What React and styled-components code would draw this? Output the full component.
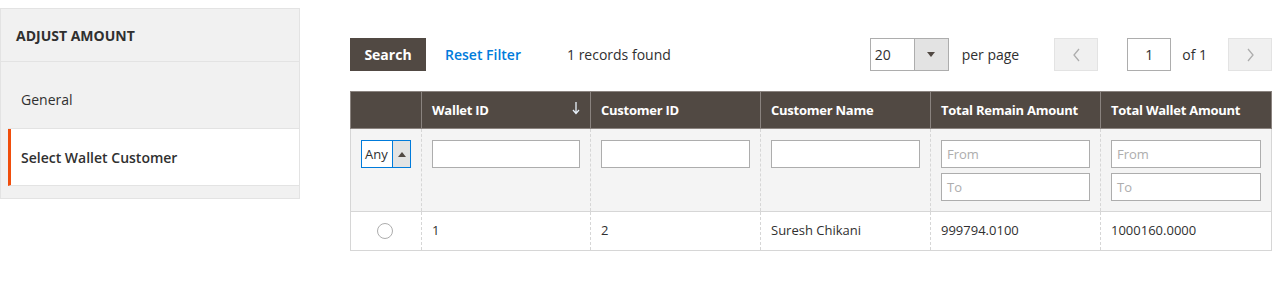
import React from "react";
import styled, { createGlobalStyle } from "styled-components";

const Global = createGlobalStyle`
  html, body { margin: 0; padding: 0; background: #fff; }
  body { font-family: "Open Sans", "Noto Sans", sans-serif; color: #303030; font-size: 14px; }
  * { box-sizing: border-box; }
`;

const Page = styled.div`
  display: flex;
  align-items: flex-start;
  gap: 50px;
  padding-top: 8px;
`;

const Sidebar = styled.div`
  width: 300px;
  flex: none;
  background: #f1f1f1;
  border: 1px solid #e3e3e3;
  padding-bottom: 12px;
`;

const SideTitle = styled.div`
  height: 53px;
  display: flex;
  align-items: center;
  padding-left: 15px;
  border-bottom: 1px solid #e3e3e3;
  font-weight: 700;
  font-size: 14px;
  text-transform: uppercase;
  color: #303030;
`;

const NavItem = styled.div`
  margin-left: 7px;
  display: flex;
  align-items: center;
  height: ${(p) => (p.$active ? "57px" : "67px")};
  padding-left: ${(p) => (p.$active ? "10px" : "13px")};
  border-bottom: 1px solid #e3e3e3;
  border-left: ${(p) => (p.$active ? "3px solid #f04e0c" : "none")};
  background: ${(p) => (p.$active ? "#fff" : "transparent")};
  font-weight: ${(p) => (p.$active ? 600 : 400)};
  font-size: 14px;
  color: #303030;
  padding-top: ${(p) => (p.$active ? "0" : "8px")};
`;

const Main = styled.div`
  width: 922px;
  padding-top: 30px;
`;

const Toolbar = styled.div`
  display: flex;
  align-items: center;
  height: 33px;
  margin-bottom: 20px;
`;

const SearchButton = styled.button`
  height: 33px;
  width: 76px;
  border: none;
  background: #514943;
  color: #fff;
  font-family: inherit;
  font-weight: 700;
  font-size: 14px;
  padding: 0;
  cursor: pointer;
`;

const LinkButton = styled.span`
  margin-left: 19px;
  color: #007bdb;
  font-weight: 600;
  font-size: 14px;
`;

const Count = styled.span`
  margin-left: 46px;
  font-size: 14px;
  color: #303030;
`;

const Spacer = styled.div`
  flex: 1;
`;

const PerPageSelect = styled.div`
  display: flex;
  width: 79px;
  height: 33px;
  border: 1px solid #adadad;
  background: #fff;
`;

const SelectValue = styled.div`
  flex: 1;
  display: flex;
  align-items: center;
  padding-left: 4px;
  font-size: 14px;
`;

const SelectArrow = styled.div`
  width: 34px;
  background: #e3e3e3;
  border-left: 1px solid #adadad;
  display: flex;
  align-items: center;
  justify-content: center;
`;

const Triangle = styled.span`
  width: 0;
  height: 0;
  border-left: 4px solid transparent;
  border-right: 4px solid transparent;
  ${(p) => (p.$up ? "border-bottom: 5px solid #514943;" : "border-top: 5px solid #514943;")}
`;

const Label = styled.span`
  margin-left: ${(p) => p.$ml || 0}px;
  font-size: 14px;
  color: #303030;
`;

const PagerButton = styled.div`
  margin-left: ${(p) => p.$ml || 0}px;
  width: 44px;
  height: 33px;
  background: #f0f0f0;
  border: 1px solid #e3e3e3;
  display: flex;
  align-items: center;
  justify-content: center;
`;

const PageInput = styled.div`
  margin-left: 29px;
  width: 44px;
  height: 33px;
  border: 1px solid #adadad;
  display: flex;
  align-items: center;
  justify-content: center;
  font-size: 14px;
`;

const Table = styled.table`
  width: 921px;
  border-collapse: collapse;
  table-layout: fixed;
`;

const Th = styled.th`
  height: 37px;
  background: #514943;
  color: #fff;
  font-size: 13px;
  font-weight: 700;
  letter-spacing: -0.25px;
  text-align: left;
  padding: 0 10px 1px;
  border: 1px solid #8a837f;
  position: relative;
  white-space: nowrap;
`;

const SortArrow = styled.svg`
  position: absolute;
  right: 10px;
  top: 9px;
`;

const FilterTd = styled.td`
  background: #f4f4f4;
  vertical-align: top;
  padding: 11px 10px 10px;
  border-left: 1px dashed #d6d6d6;
  border-right: 1px dashed #d6d6d6;
  height: 81px;
  &:first-child { border-left: 1px solid #d6d6d6; }
  &:last-child { border-right: 1px solid #d6d6d6; }
`;

const Input = styled.div`
  height: 28px;
  background: #fff;
  border: 1px solid #adadad;
  font-size: 13px;
  color: #adadad;
  display: flex;
  align-items: center;
  padding-left: 5px;
  & + & { margin-top: 5px; }
`;

const AnySelect = styled.div`
  display: flex;
  width: 50px;
  height: 28px;
  border: 1px solid #007bdb;
  background: #fff;
`;

const AnyValue = styled.div`
  flex: 1;
  display: flex;
  align-items: center;
  padding-left: 3px;
  font-size: 13px;
  color: #303030;
`;

const AnyArrow = styled.div`
  width: 18px;
  background: #e3e3e3;
  border-left: 1px solid #007bdb;
  display: flex;
  align-items: center;
  justify-content: center;
`;

const DataTd = styled.td`
  height: 39px;
  padding: 0 10px 3px;
  font-size: 13px;
  color: #303030;
  text-align: ${(p) => (p.$center ? "center" : "left")};
  border-left: 1px dashed #d6d6d6;
  border-right: 1px dashed #d6d6d6;
  border-top: 1px solid #d6d6d6;
  border-bottom: 1px solid #d6d6d6;
  &:first-child { border-left: 1px solid #d6d6d6; }
  &:last-child { border-right: 1px solid #d6d6d6; }
`;

const Radio = styled.span`
  display: inline-block;
  width: 16px;
  height: 16px;
  margin-right: 3px;
  border-radius: 50%;
  border: 1px solid #adadad;
  background: #fff;
  vertical-align: middle;
`;

const Chevron = ({ dir }) => (
  <svg width="9" height="14" viewBox="0 0 9 14">
    <path
      d={dir === "left" ? "M7 1 L2 7 L7 13" : "M2 1 L7 7 L2 13"}
      fill="none"
      stroke="#adadad"
      strokeWidth="1.3"
    />
  </svg>
);

const cols = [71, 169, 170, 170, 170, 171];

export default function App() {
  return (
    <>
      <Global />
      <Page>
        <Sidebar>
          <SideTitle>Adjust Amount</SideTitle>
          <NavItem>General</NavItem>
          <NavItem $active>Select Wallet Customer</NavItem>
        </Sidebar>
        <Main>
          <Toolbar>
            <SearchButton>Search</SearchButton>
            <LinkButton>Reset Filter</LinkButton>
            <Count>1 records found</Count>
            <Spacer />
            <PerPageSelect>
              <SelectValue>20</SelectValue>
              <SelectArrow>
                <Triangle />
              </SelectArrow>
            </PerPageSelect>
            <Label $ml={13}>per page</Label>
            <PagerButton $ml={35}>
              <Chevron dir="left" />
            </PagerButton>
            <PageInput>1</PageInput>
            <Label $ml={11}>of 1</Label>
            <PagerButton $ml={21}>
              <Chevron dir="right" />
            </PagerButton>
          </Toolbar>
          <Table>
            <colgroup>
              {cols.map((w, i) => (
                <col key={i} style={{ width: w }} />
              ))}
            </colgroup>
            <thead>
              <tr>
                <Th />
                <Th>
                  Wallet ID
                  <SortArrow width="8" height="14" viewBox="0 0 8 14">
                    <path d="M4 1 V12 M1 9 L4 12.5 L7 9" fill="none" stroke="#e8f1fb" strokeWidth="1.3" />
                  </SortArrow>
                </Th>
                <Th>Customer ID</Th>
                <Th>Customer Name</Th>
                <Th>Total Remain Amount</Th>
                <Th>Total Wallet Amount</Th>
              </tr>
            </thead>
            <tbody>
              <tr>
                <FilterTd>
                  <AnySelect>
                    <AnyValue>Any</AnyValue>
                    <AnyArrow>
                      <Triangle $up />
                    </AnyArrow>
                  </AnySelect>
                </FilterTd>
                <FilterTd>
                  <Input />
                </FilterTd>
                <FilterTd>
                  <Input />
                </FilterTd>
                <FilterTd>
                  <Input />
                </FilterTd>
                <FilterTd>
                  <Input>From</Input>
                  <Input>To</Input>
                </FilterTd>
                <FilterTd>
                  <Input>From</Input>
                  <Input>To</Input>
                </FilterTd>
              </tr>
              <tr>
                <DataTd $center>
                  <Radio />
                </DataTd>
                <DataTd>1</DataTd>
                <DataTd>2</DataTd>
                <DataTd>Suresh Chikani</DataTd>
                <DataTd>999794.0100</DataTd>
                <DataTd>1000160.0000</DataTd>
              </tr>
            </tbody>
          </Table>
        </Main>
      </Page>
    </>
  );
}
